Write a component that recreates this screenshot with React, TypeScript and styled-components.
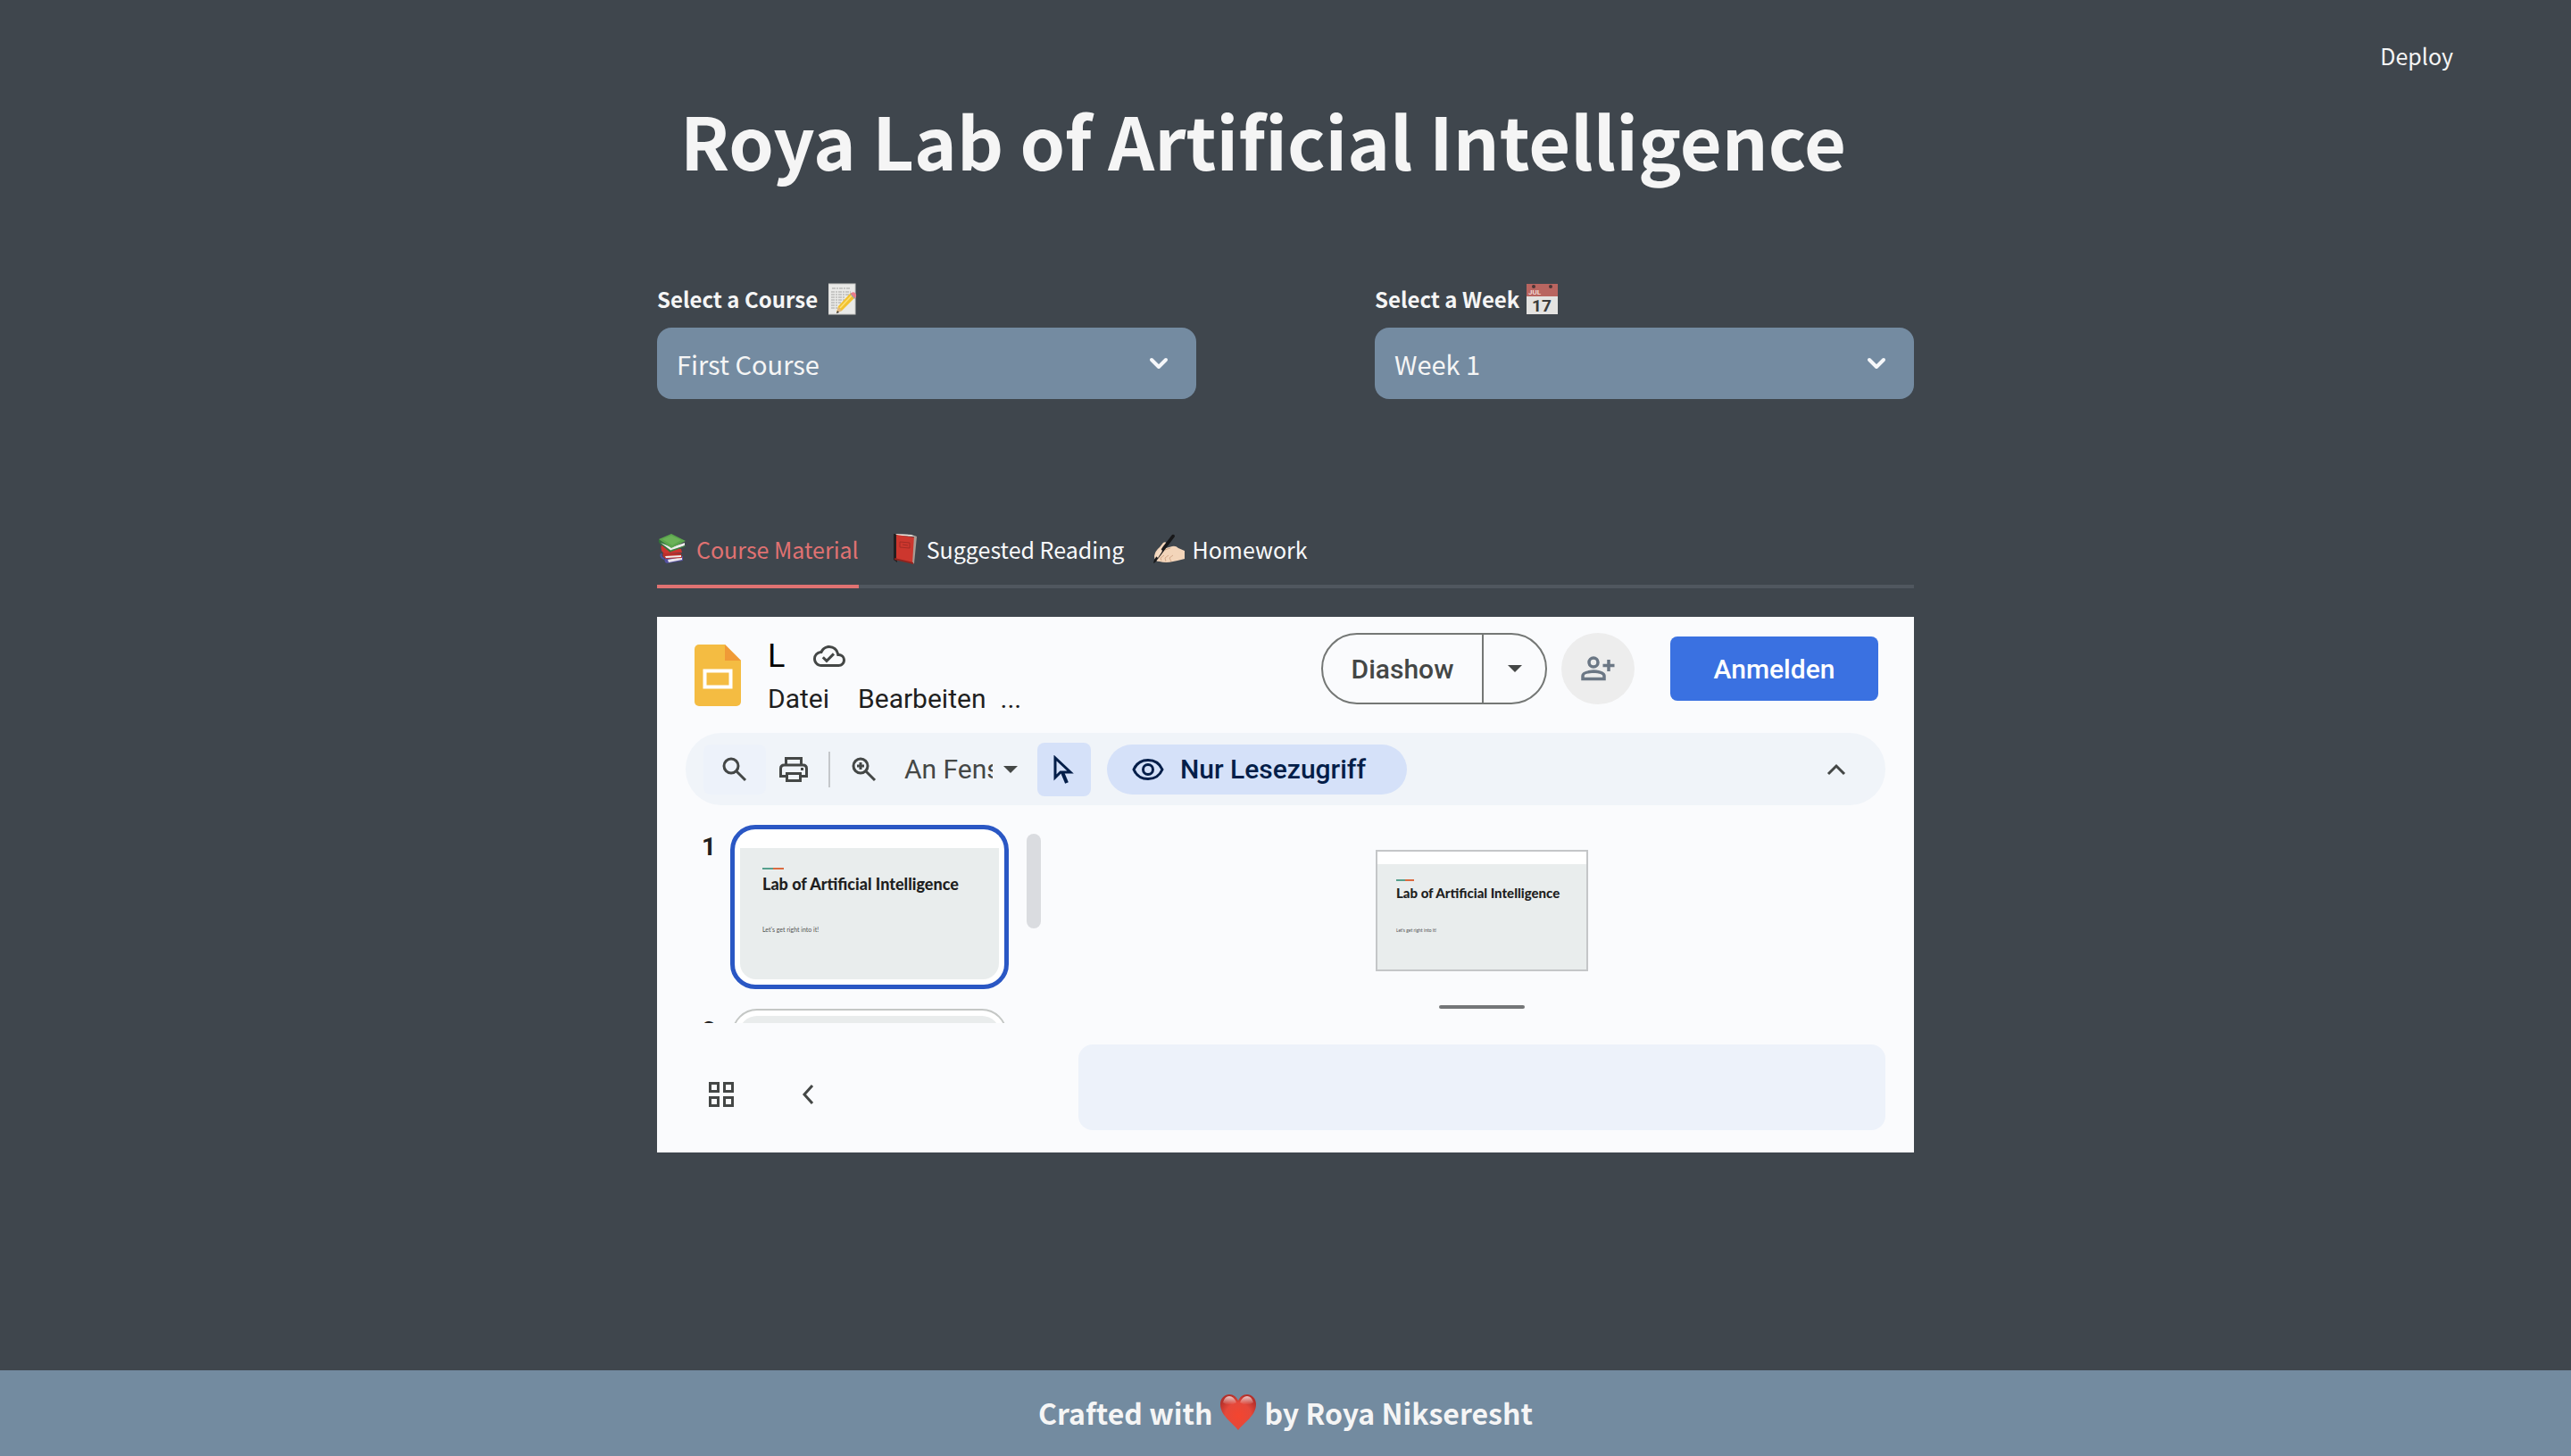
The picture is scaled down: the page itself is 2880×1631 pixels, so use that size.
import React, { useState } from "react";
import styled, { createGlobalStyle } from "styled-components";

const sans = `"Noto Sans CJK SC", "Noto Sans", sans-serif`;
const ui = `Roboto, "Noto Sans", sans-serif`;
const slideFont = `Lato, "Open Sans", sans-serif`;

const GlobalStyle = createGlobalStyle`
  *, *::before, *::after { box-sizing: border-box; }
  body { margin: 0; background: #3f464d; color: #f5f5f5; font-family: ${sans}; }
  button, select { font: inherit; color: inherit; background: none; border: 0; padding: 0; margin: 0; cursor: pointer; }
  svg { display: block; flex: none; }
`;

const Page = styled.div`
  min-height: 100vh;
  display: flex;
  flex-direction: column;
`;
const Header = styled.header`
  display: flex;
  justify-content: flex-end;
  padding: 44px 132px 0;
`;
const DeployButton = styled.button`
  font-size: 25px;
  line-height: 36px;
`;
const Main = styled.main`
  width: 100%;
  max-width: 1408px;
  margin: 0 auto;
  padding-bottom: 48px;
`;
const Title = styled.h1`
  margin: 32px 0 0;
  padding-left: 26px;
  font-size: 81px;
  line-height: 88px;
  font-weight: 700;
`;
const Filters = styled.div`
  display: grid;
  grid-template-columns: 1fr 1fr;
  column-gap: 200px;
  margin-top: 115px;
`;
const Field = styled.div`
  display: grid;
  row-gap: 12px;
`;
const FieldLabel = styled.label<{ $gap: number }>`
  display: flex;
  align-items: center;
  gap: ${(p) => p.$gap}px;
  font-size: 24px;
  line-height: 40px;
  font-weight: 700;
`;
const SelectWrap = styled.div`
  display: grid;
  align-items: center;
  background: #748ba1;
  border-radius: 16px;
  > * { grid-area: 1 / 1; }
  > svg { justify-self: end; margin-right: 24px; pointer-events: none; }
`;
const Select = styled.select`
  appearance: none;
  width: 100%;
  height: 80px;
  padding: 0 64px 0 22px;
  font-size: 29px;
  line-height: 40px;
  border-radius: 16px;
`;
const Tabs = styled.div`
  display: flex;
  gap: 32px;
  margin-top: 128px;
  box-shadow: inset 0 -4px #50575f;
`;
const Tab = styled.button<{ $active: boolean }>`
  display: flex;
  align-items: center;
  gap: 8px;
  height: 84px;
  border-bottom: 4px solid ${(p) => (p.$active ? "#e07272" : "transparent")};
  color: ${(p) => (p.$active ? "#e07272" : "#f8f9fb")};
  font-size: 25px;
  line-height: 36px;
`;
const Footer = styled.footer`
  display: flex;
  align-items: center;
  justify-content: center;
  gap: 8px;
  height: 96px;
  padding-bottom: 2px;
  margin-top: auto;
  background: #738ba0;
  font-size: 32px;
  font-weight: 700;
`;

const Viewer = styled.section`
  display: flex;
  flex-direction: column;
  margin-top: 32px;
  height: 600px;
  background: #fafbfd;
  color: #1f1f1f;
  font-family: ${ui};
`;
const DocHeader = styled.div`
  display: flex;
  align-items: flex-start;
  padding: 18px 40px 0 42px;
`;
const DocIcon = styled.div`
  padding-top: 13px;
`;
const DocInfo = styled.div`
  flex: 1;
  margin-left: 30px;
`;
const DocName = styled.div`
  display: flex;
  align-items: center;
  gap: 32px;
  height: 56px;
  padding-bottom: 4px;
  font-size: 36px;
  line-height: 52px;
  color: #000;
`;
const MenuBar = styled.div`
  display: flex;
  gap: 32px;
  font-size: 30px;
  line-height: 36px;
`;
const MenuGroup = styled.div`
  display: flex;
  gap: 16px;
`;
const SplitButton = styled.div`
  display: flex;
  height: 80px;
  border: 2px solid #747775;
  border-radius: 40px;
  color: #444746;
  font-size: 30px;
  font-weight: 500;
`;
const SplitMain = styled.button`
  width: 180px;
  border-right: 2px solid #747775;
`;
const SplitCaret = styled.button`
  display: grid;
  place-items: center;
  width: 69px;
`;
const RoundButton = styled.button`
  display: grid;
  place-items: center;
  width: 82px;
  height: 80px;
  margin: 0 40px 0 16px;
  border-radius: 50%;
  background: #ededed;
`;
const SignIn = styled.button`
  width: 233px;
  height: 72px;
  margin-top: 4px;
  border-radius: 8px;
  background: #3a71e1;
  color: #fff;
  font-size: 30px;
  font-weight: 500;
`;
const Toolbar = styled.div`
  display: flex;
  align-items: center;
  height: 81px;
  margin: 20px 32px 0;
  padding: 0 44px 0 20px;
  border-radius: 40px;
  background: #f0f4f9;
  color: #444746;
  font-size: 30px;
`;
const ToolButton = styled.button<{ $w: number; $tone?: "soft" | "on" }>`
  display: grid;
  place-items: center;
  width: ${(p) => p.$w}px;
  height: ${(p) => (p.$tone === "soft" ? 56 : 60)}px;
  border-radius: 8px;
  background: ${(p) => (p.$tone === "on" ? "#d5e1f9" : p.$tone === "soft" ? "#edf2fa" : "transparent")};
`;
const ToolRule = styled.span`
  width: 2px;
  height: 40px;
  margin: 0 18px 0 8px;
  background: #c4c7cb;
`;
const ZoomBox = styled.button`
  display: flex;
  align-items: center;
  gap: 12px;
  margin: 0 22px 0 25px;
`;
const ZoomText = styled.span`
  width: 99px;
  overflow: hidden;
  white-space: nowrap;
`;
const ReadOnly = styled.button`
  display: flex;
  align-items: center;
  gap: 18px;
  width: 336px;
  height: 56px;
  margin: 0 auto 0 18px;
  padding-left: 28px;
  border-radius: 28px;
  background: #d5e1f9;
  color: #041e49;
  font-weight: 500;
`;
const Work = styled.div`
  flex: 1;
  display: grid;
  grid-template-columns: 472px 1fr;
  padding-right: 32px;
`;
const Side = styled.div`
  display: flex;
  flex-direction: column;
`;
const FilmScroll = styled.div`
  display: flex;
  justify-content: space-between;
  height: 244px;
  padding: 22px 42px 0 42px;
  overflow: hidden;
`;
const Film = styled.ol`
  display: flex;
  flex-direction: column;
  gap: 22px;
  margin: 0;
  padding: 0;
  list-style: none;
`;
const FilmItem = styled.li`
  display: flex;
  gap: 8px;
`;
const FilmNumber = styled.span`
  width: 32px;
  padding-top: 9px;
  text-align: center;
  font-size: 28px;
  line-height: 32px;
  font-weight: 700;
`;
const Thumb = styled.div<{ $active: boolean }>`
  width: ${(p) => (p.$active ? 312 : 308)}px;
  height: 184px;
  margin: 0 ${(p) => (p.$active ? 0 : 2)}px;
  padding: 6px;
  overflow: hidden;
  border: ${(p) => (p.$active ? "5px solid #2a57c4" : "2px solid #c4c7c5")};
  border-radius: 28px;
  background: #fff;
`;
const BlankSlide = styled.div`
  height: 100%;
  border-radius: 20px;
  background: #e9ecec;
`;
const Slide = styled.div<{ $large?: boolean }>`
  height: 100%;
  border-top: ${(p) => (p.$large ? 14 : 15)}px solid #fff;
  border-radius: ${(p) => (p.$large ? "0" : "0 0 18px 18px")};
  background: #e9eded;
  padding: ${(p) => (p.$large ? "17px 21px" : "22px 25px")};
  font-family: ${slideFont};
`;
const Accent = styled.div<{ $large?: boolean }>`
  width: ${(p) => (p.$large ? 20 : 24)}px;
  height: 2px;
  background: linear-gradient(90deg, #56a08e 50%, #db6b40 50%);
`;
const SlideTitle = styled.div<{ $large?: boolean }>`
  margin-top: ${(p) => (p.$large ? 4 : 6)}px;
  font-size: ${(p) => (p.$large ? 15 : 18)}px;
  line-height: ${(p) => (p.$large ? 18 : 20)}px;
  font-weight: 900;
  white-space: nowrap;
`;
const SlideText = styled.div<{ $large?: boolean }>`
  margin-top: ${(p) => (p.$large ? 28 : 36)}px;
  color: #555;
  font-size: ${(p) => (p.$large ? 5 : 7)}px;
  line-height: 10px;
`;
const ScrollThumb = styled.div`
  width: 16px;
  height: 106px;
  margin-top: 10px;
  border-radius: 8px;
  background: #dadce0;
`;
const SideFooter = styled.div`
  display: flex;
  align-items: center;
  gap: 76px;
  padding: 66px 58px 0;
`;
const Stage = styled.div`
  display: flex;
  flex-direction: column;
  align-items: center;
`;
const Canvas = styled.div`
  width: 238px;
  height: 136px;
  margin: 50px 0 38px;
  border: 2px solid #c4c6c8;
`;
const Grip = styled.div`
  width: 96px;
  height: 4px;
  border-radius: 2px;
  background: #747678;
`;
const Notes = styled.div`
  align-self: stretch;
  height: 96px;
  margin-top: 40px;
  border-radius: 16px;
  background: #edf2fa;
`;

const Chevron = ({ d, w = 24, h = 24, color = "#444746", stroke = 4 }: { d: string; w?: number; h?: number; color?: string; stroke?: number }) => (
  <svg width={w} height={h} viewBox={`0 0 ${w} ${h}`} fill="none" stroke={color} strokeWidth={stroke}>
    <path d={d} />
  </svg>
);
const SelectArrow = () => (
  <svg width="36" height="24" viewBox="0 0 36 24" fill="none" stroke="#f5f7fa" strokeWidth="4" strokeLinecap="round" strokeLinejoin="round">
    <path d="M10 8l8 8 8-8" />
  </svg>
);
const Caret = () => (
  <svg width="16" height="8" viewBox="0 0 16 8" fill="#444746"><path d="M0 0h16L8 8z" /></svg>
);

const MemoEmoji = () => (
  <svg width="32" height="36" viewBox="0 0 32 36">
    <rect x="0" y="1" width="30" height="34" fill="#e9e9e7" stroke="#c9c9c7" />
    <path d="M4 6h20M3 10h22M3 13h20M3 16h16M3 19h15M3 22h11M3 25h8M3 28h7" stroke="#a5a5a3" strokeWidth="1" strokeDasharray="4 1 2 1" />
    <path d="M9 33l2-7L25 11l5 5-15 15z" fill="#f2c230" />
    <path d="M13 28L27 13" stroke="#fbe07a" strokeWidth="1.5" />
    <path d="M24 12l2-1 5 5-2 2z" fill="#9ba3a8" />
    <path d="M26 11c2-2 6 1 5 4l-1 2-5-5z" fill="#ea7b88" />
    <path d="M9 34l2-7 4 4z" fill="#dfb787" /><path d="M9 34l1-3 2 2z" fill="#333" />
  </svg>
);
const CalendarEmoji = () => (
  <svg width="36" height="36" viewBox="0 0 36 36">
    <rect y="1" width="35" height="34" fill="#e4e3e1" />
    <rect y="1" width="35" height="14" fill="#b96560" />
    <circle cx="8" cy="4" r="2" fill="#4b3637" /><circle cx="27" cy="4" r="2" fill="#4b3637" />
    <text x="2" y="13" fontFamily="Roboto" fontSize="8" fill="#f0d8d4">JUL</text>
    <text x="17" y="32" textAnchor="middle" fontFamily="Roboto" fontSize="19" fill="#3b3b3b">17</text>
  </svg>
);
const BooksEmoji = () => (
  <svg width="36" height="36" viewBox="0 0 36 36">
    <path d="M9 28l20-2v5l-18 3q-4-2-2-6z" fill="#5350a0" /><path d="M12 30l16-3v3l-15 3z" fill="#ece6ec" />
    <path d="M7 22l20 1 1 5-18 1q-5-2-3-7z" fill="#b92f2b" /><path d="M9 26l18-1v2l-17 1z" fill="#f0ecea" />
    <path d="M5 13l22 5 1 4-19 1q-6-2-4-10z" fill="#cc3430" /><path d="M5 23q-2 4 3 6" stroke="#49539b" strokeWidth="2" fill="none" />
    <path d="M2 7q-1 3 1 5l12 10 2-5z" fill="#32713a" />
    <path d="M4 11l12 9 15-6v-3L16 16z" fill="#ecedea" />
    <path d="M2 7l14-6 16 8-16 8z" fill="#5ba64d" />
    <path d="M15 20l1 1 16-6v-1l-16 5z" fill="#3b8040" />
    <path d="M6 7l10-4 11 5-10 6z" fill="#7cbd64" opacity=".5" />
  </svg>
);
const RedBookEmoji = () => (
  <svg width="36" height="36" viewBox="0 0 36 36">
    <path d="M7 1h4v32l-4-3z" fill="#231f20" />
    <path d="M9 1l18 1 5 2-20-1z" fill="#f0e7df" />
    <path d="M10 2l21 3-2 29-19-4z" fill="#cd372e" />
    <path d="M30 3l3 1-3 30-2 1z" fill="#a99c94" />
    <path d="M14 10l11 1v6l-11-1zM17 13l6 1" fill="none" stroke="#a42b25" />
    <path d="M8 30l21 5v-2L8 28z" fill="#8f241e" />
  </svg>
);
const WritingEmoji = () => (
  <svg width="36" height="36" viewBox="0 0 36 36">
    <path d="M2 26Q3 20 8 16l4-5q3-2 4 1l-1 5 7-2q4-1 7 2l7 3v9l-8 2-5 1q-8 2-15 0-6 0-6-6z" fill="#f3d5ba" />
    <path d="M14 19l6-2M10 31l-1-3 4-3M15 32l-1-4 4-3M21 32l-2-4 4-3" fill="none" stroke="#d3a98a" strokeWidth="1" />
    <path d="M22 2q3-1 3 2L10 24 3 33l-2 1 1-4L12 15z" fill="#18181a" />
    <path d="M3 25q2-5 6-7 3 1 1 4l-4 6z" fill="#f6dcc4" />
  </svg>
);
const HeartEmoji = () => (
  <svg width="42" height="42" viewBox="0 0 42 42">
    <defs>
      <radialGradient id="heart" cx="50%" cy="60%" r="60%">
        <stop offset="0" stopColor="#f4452f" /><stop offset=".6" stopColor="#e5483a" /><stop offset="1" stopColor="#b5302a" />
      </radialGradient>
      <linearGradient id="shine" x1="0" y1="0" x2="0" y2="1">
        <stop offset="0" stopColor="#fff" stopOpacity=".75" /><stop offset="1" stopColor="#fff" stopOpacity="0" />
      </linearGradient>
    </defs>
    <path d="M21 41C15 33 1 25 1 12 1 5 6 1 11 1c5 0 8 3 10 7 2-4 5-7 10-7 5 0 10 4 10 11 0 13-14 21-20 29z" fill="url(#heart)" />
    <path d="M4 10q2-7 7-7t8 7q-8 5-15 0zM23 10q3-7 8-7t7 7q-7 5-15 0z" fill="url(#shine)" />
  </svg>
);

const SlidesLogo = () => (
  <svg width="52" height="69" viewBox="0 0 52 69">
    <path d="M5 0h29l18 18v46a5 5 0 0 1-5 5H5a5 5 0 0 1-5-5V5a5 5 0 0 1 5-5z" fill="#f4bc42" />
    <path d="M34 0l18 18H34z" fill="#f09a37" />
    <rect x="11.500" y="29.500" width="29" height="18" fill="none" stroke="#fff" strokeWidth="4" />
  </svg>
);
const CloudDone = () => (
  <svg width="36" height="36" viewBox="0 0 24 24" fill="#444746">
    <path d="M19.350 10.040A7.490 7.490 0 0 0 12 4C9.110 4 6.600 5.640 5.350 8.040A5.994 5.994 0 0 0 0 14c0 3.310 2.690 6 6 6h13c2.760 0 5-2.240 5-5 0-2.640-2.050-4.780-4.650-4.960zM19 18H6c-2.210 0-4-1.790-4-4 0-2.050 1.530-3.760 3.560-3.970l1.070-.11.500-.95A5.469 5.469 0 0 1 12 6c2.620 0 4.880 1.860 5.390 4.430l.3 1.500 1.530.11A2.980 2.980 0 0 1 22 15c0 1.650-1.350 3-3 3zm-9-3.820l-2.090-2.090L6.500 13.500 10 17l6.010-6.010-1.410-1.410z" />
  </svg>
);
const Search = ({ plus = false }: { plus?: boolean }) => (
  <svg width="28" height="28" viewBox="0 0 28 28" fill="none" stroke="#444746" strokeWidth="3">
    <circle cx="10" cy="10" r="8" /><path d="M16 16l10 10" />
    {plus && <path d="M10 6v8M6 10h8" />}
  </svg>
);
const Print = () => (
  <svg width="32" height="28" viewBox="0 0 32 28" fill="none" stroke="#444746" strokeWidth="3">
    <path d="M7.500 8V1.500h17V8M7 21.500H1.500V13q0-4 4-4h21q4 0 4 4v8.500H25" />
    <rect x="8.500" y="18.500" width="15" height="8" /><path d="M24 13.500h3" />
  </svg>
);
const Pointer = () => (
  <svg width="24" height="32" viewBox="0 0 24 32" fill="none" stroke="#041e49" strokeWidth="3">
    <path d="M2 3v22l6-6h11z" /><path d="M10 19l5 12" strokeWidth="4" />
  </svg>
);
const Eye = () => (
  <svg width="36" height="24" viewBox="0 0 36 24" fill="none" stroke="#041e49" strokeWidth="3">
    <path d="M2 12C5 5 11 1.500 18 1.500S31 5 34 12c-3 7-9 10.500-16 10.500S5 19 2 12z" /><circle cx="18" cy="12" r="5.500" />
  </svg>
);
const PersonAdd = () => (
  <svg width="38" height="28" viewBox="0 0 38 28" fill="none" stroke="#6b7785" strokeWidth="3.500">
    <circle cx="14" cy="7" r="5" /><path d="M2 25.500V22q0-4 12-5 12 1 12 5v3.500zM31 4v13M24.500 10.500h13" />
  </svg>
);
const Grid = () => (
  <svg width="28" height="28" viewBox="0 0 28 28" fill="none" stroke="#444746" strokeWidth="3">
    <path d="M1.500 1.500h9v9h-9zM17.500 1.500h9v9h-9zM1.500 17.500h9v9h-9zM17.500 17.500h9v9h-9z" />
  </svg>
);

const tabs = [
  { name: "Course Material", icon: <BooksEmoji /> },
  { name: "Suggested Reading", icon: <RedBookEmoji /> },
  { name: "Homework", icon: <WritingEmoji /> },
];

const TitleSlide = ({ large }: { large?: boolean }) => (
  <Slide $large={large}>
    <Accent $large={large} />
    <SlideTitle $large={large}>Lab of Artificial Intelligence</SlideTitle>
    <SlideText $large={large}>Let's get right into it!</SlideText>
  </Slide>
);

const SlidesViewer = () => (
  <Viewer aria-label="Slides">
    <DocHeader>
      <DocIcon><SlidesLogo /></DocIcon>
      <DocInfo>
        <DocName>L <CloudDone /></DocName>
        <MenuBar>
          <button>Datei</button>
          <MenuGroup><button>Bearbeiten</button><button>...</button></MenuGroup>
        </MenuBar>
      </DocInfo>
      <SplitButton>
        <SplitMain>Diashow</SplitMain>
        <SplitCaret aria-label="Diashow-Optionen"><Caret /></SplitCaret>
      </SplitButton>
      <RoundButton aria-label="Freigeben"><PersonAdd /></RoundButton>
      <SignIn>Anmelden</SignIn>
    </DocHeader>
    <Toolbar>
      <ToolButton $w={70} $tone="soft" aria-label="Suchen"><Search /></ToolButton>
      <ToolButton $w={62} aria-label="Drucken"><Print /></ToolButton>
      <ToolRule />
      <ToolButton $w={40} aria-label="Zoomen"><Search plus /></ToolButton>
      <ZoomBox><ZoomText>An Fens</ZoomText><Caret /></ZoomBox>
      <ToolButton $w={60} $tone="on" aria-label="Auswählen"><Pointer /></ToolButton>
      <ReadOnly><Eye />Nur Lesezugriff</ReadOnly>
      <button aria-label="Menüs ausblenden"><Chevron d="M2 17l9-9 9 9" w={22} stroke={3} /></button>
    </Toolbar>
    <Work>
      <Side>
        <FilmScroll>
          <Film>
            <FilmItem><FilmNumber>1</FilmNumber><Thumb $active><TitleSlide /></Thumb></FilmItem>
            <FilmItem><FilmNumber>2</FilmNumber><Thumb $active={false}><BlankSlide /></Thumb></FilmItem>
          </Film>
          <ScrollThumb />
        </FilmScroll>
        <SideFooter>
          <button aria-label="Rasteransicht"><Grid /></button>
          <button aria-label="Filmstreifen ausblenden"><Chevron d="M12 2l-9 10 9 10" w={14} stroke={3} /></button>
        </SideFooter>
      </Side>
      <Stage>
        <Canvas><TitleSlide large /></Canvas>
        <Grip />
        <Notes />
      </Stage>
    </Work>
  </Viewer>
);

export default function App() {
  const [active, setActive] = useState(0);
  return (
    <Page>
      <GlobalStyle />
      <Header><DeployButton>Deploy</DeployButton></Header>
      <Main>
        <Title>Roya Lab of Artificial Intelligence</Title>
        <Filters>
          <Field>
            <FieldLabel htmlFor="course" $gap={12}>Select a Course <MemoEmoji /></FieldLabel>
            <SelectWrap>
              <Select id="course"><option>First Course</option></Select>
              <SelectArrow />
            </SelectWrap>
          </Field>
          <Field>
            <FieldLabel htmlFor="week" $gap={8}>Select a Week <CalendarEmoji /></FieldLabel>
            <SelectWrap>
              <Select id="week"><option>Week 1</option></Select>
              <SelectArrow />
            </SelectWrap>
          </Field>
        </Filters>
        <Tabs role="tablist">
          {tabs.map((t, i) => (
            <Tab key={t.name} role="tab" aria-selected={i === active} $active={i === active} onClick={() => setActive(i)}>
              {t.icon}{t.name}
            </Tab>
          ))}
        </Tabs>
        <SlidesViewer />
      </Main>
      <Footer>Crafted with <HeartEmoji /> by Roya Nikseresht</Footer>
    </Page>
  );
}
